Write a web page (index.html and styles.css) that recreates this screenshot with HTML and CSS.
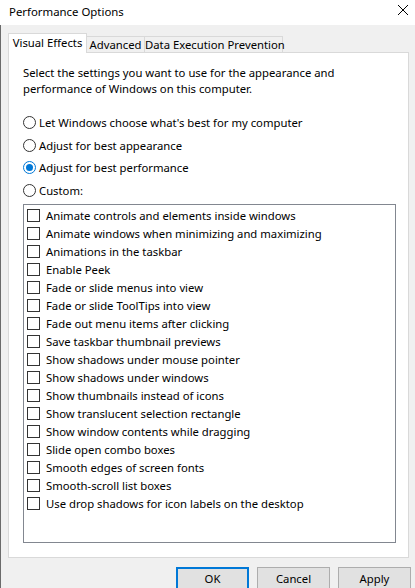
FILE: index.html
```html
<!DOCTYPE html>
<html lang="en">
<head>
<meta charset="utf-8">
<title>Performance Options</title>
<link rel="stylesheet" href="styles.css">
</head>
<body>
<div class="window">
  <div class="titlebar">
    <span class="title">Performance Options</span>
    <svg class="close" width="10" height="10" viewBox="0 0 10 10" aria-hidden="true">
      <path d="M0 0L10 10M10 0L0 10" stroke="#000" stroke-width="1" fill="none"/>
    </svg>
  </div>
  <div class="body">
    <div class="tabs">
      <div class="tab tab-active tab-ve">Visual Effects</div>
      <div class="tab tab-adv">Advanced</div>
      <div class="tab tab-dep">Data Execution Prevention</div>
    </div>
    <div class="panel">
      <p class="intro">Select the settings you want to use for the appearance and<br>performance of Windows on this computer.</p>
      <div class="radios">
        <div class="radio-row"><span class="radio"></span><span>Let Windows choose what's best for my computer</span></div>
        <div class="radio-row"><span class="radio"></span><span>Adjust for best appearance</span></div>
        <div class="radio-row"><span class="radio radio-on"></span><span>Adjust for best performance</span></div>
        <div class="radio-row"><span class="radio"></span><span>Custom:</span></div>
      </div>
      <div class="listbox">
        <div class="check-row"><span class="check"></span><span>Animate controls and elements inside windows</span></div>
        <div class="check-row"><span class="check"></span><span>Animate windows when minimizing and maximizing</span></div>
        <div class="check-row"><span class="check"></span><span>Animations in the taskbar</span></div>
        <div class="check-row"><span class="check"></span><span>Enable Peek</span></div>
        <div class="check-row"><span class="check"></span><span>Fade or slide menus into view</span></div>
        <div class="check-row"><span class="check"></span><span>Fade or slide ToolTips into view</span></div>
        <div class="check-row"><span class="check"></span><span>Fade out menu items after clicking</span></div>
        <div class="check-row"><span class="check"></span><span>Save taskbar thumbnail previews</span></div>
        <div class="check-row"><span class="check"></span><span>Show shadows under mouse pointer</span></div>
        <div class="check-row"><span class="check"></span><span>Show shadows under windows</span></div>
        <div class="check-row"><span class="check"></span><span>Show thumbnails instead of icons</span></div>
        <div class="check-row"><span class="check"></span><span>Show translucent selection rectangle</span></div>
        <div class="check-row"><span class="check"></span><span>Show window contents while dragging</span></div>
        <div class="check-row"><span class="check"></span><span>Slide open combo boxes</span></div>
        <div class="check-row"><span class="check"></span><span>Smooth edges of screen fonts</span></div>
        <div class="check-row"><span class="check"></span><span>Smooth-scroll list boxes</span></div>
        <div class="check-row"><span class="check"></span><span>Use drop shadows for icon labels on the desktop</span></div>
      </div>
    </div>
    <div class="buttons">
      <button class="btn btn-default">OK</button>
      <button class="btn">Cancel</button>
      <button class="btn">Apply</button>
    </div>
  </div>
</div>
</body>
</html>
```
FILE: styles.css
```css
html, body {
  margin: 0;
  padding: 0;
}
body {
  width: 415px;
  height: 588px;
  overflow: hidden;
  background: #f0f0f0;
  font-family: "Noto Sans", "Open Sans", sans-serif;
  font-size: 11.3px;
  color: #000;
}
.window {
  width: 415px;
  height: 588px;
  display: flex;
  flex-direction: column;
}
.titlebar {
  height: 25px;
  flex: none;
  background: #fff;
  display: flex;
  justify-content: space-between;
  align-items: flex-start;
  padding: 0 7px 0 9px;
  box-sizing: border-box;
}
.title {
  line-height: 23px;
  font-size: 11.4px;
}
.close {
  margin-top: 5px;
  display: block;
}
.body {
  flex: 1;
  border-left: 1px solid #6b6b6b;
  padding: 8px 0 0 7px;
  box-sizing: border-box;
}
.tabs {
  display: flex;
  align-items: flex-end;
  height: 19px;
}
.tab {
  box-sizing: border-box;
  text-align: center;
  background: #f0f0f0;
  border-top: 1px solid #d9d9d9;
  border-right: 1px solid #d9d9d9;
  height: 16px;
  line-height: 15px;
  white-space: nowrap;
}
.tab-active {
  position: relative;
  z-index: 1;
  background: #fff;
  border-left: 1px solid #d9d9d9;
  height: 20px;
  line-height: 18px;
  margin-bottom: -1px;
}
.tab-ve { width: 79px; }
.tab-adv { width: 58px; }
.tab-dep { width: 138px; }
.panel {
  width: 401px;
  height: 506px;
  box-sizing: border-box;
  background: #fff;
  border: 1px solid #d9d9d9;
  padding: 12px 0 0 14px;
}
.intro {
  margin: 0;
  line-height: 16px;
}
.radios {
  margin-top: 14.5px;
}
.radio-row {
  height: 22.5px;
  display: flex;
  align-items: center;
  gap: 3px;
  white-space: nowrap;
}
.radio {
  width: 13px;
  height: 13px;
  box-sizing: border-box;
  border: 1px solid #333;
  border-radius: 50%;
  background: #fff;
  display: flex;
  align-items: center;
  justify-content: center;
  flex: none;
}
.radio-on {
  border-color: #0078d7;
}
.radio-on::after {
  content: "";
  width: 7px;
  height: 7px;
  border-radius: 50%;
  background: #0078d7;
}
.listbox {
  margin-top: 2.5px;
  width: 373px;
  height: 339px;
  box-sizing: border-box;
  border: 1px solid #828790;
  padding: 1px 0 0 3px;
  background: #fff;
}
.check-row {
  height: 18px;
  display: flex;
  align-items: center;
  gap: 6px;
  white-space: nowrap;
}
.check {
  width: 13px;
  height: 13px;
  box-sizing: border-box;
  border: 1px solid #333;
  background: #fff;
  flex: none;
}
.buttons {
  margin-top: 9px;
  display: flex;
  justify-content: flex-end;
  gap: 8px;
  padding-right: 4px;
}
.btn {
  width: 73px;
  height: 23px;
  box-sizing: border-box;
  border: 1px solid #adadad;
  background: #e1e1e1;
  font-family: inherit;
  font-size: 11.3px;
  color: #000;
  padding: 0;
  margin: 0;
}
.btn-default {
  border: 2px solid #0078d7;
}
```
